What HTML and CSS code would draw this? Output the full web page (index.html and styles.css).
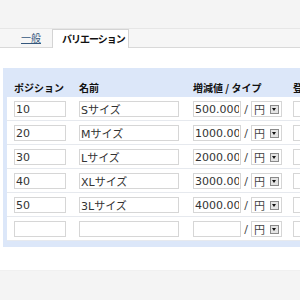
FILE: index.html
```html
<!DOCTYPE html>
<html lang="ja">
<head>
    <meta charset="UTF-8">
    <title>バリエーション</title>
    <link rel="stylesheet" href="styles.css">
</head>
<body>
    <!-- 上部の余白 -->
    <div class="top"></div>

    <!-- タブ -->
    <div class="tabs">
        <a href="#" class="tab">一般</a>
        <span class="tab active">バリエーション</span>
    </div>

    <div class="gap"></div>

    <!-- バリエーション一覧 -->
    <div class="panel">
        <div class="row head">
            <div class="c-pos">ポジション</div>
            <div class="c-name">名前</div>
            <div class="c-price">増減値 / タイプ</div>
            <div class="c-rest">登録</div>
        </div>
        <div class="list">
            <div class="row">
                <div class="c-pos"><input class="in-pos" type="text" value="10"></div>
                <div class="c-name"><input class="in-name" type="text" value="Sサイズ"></div>
                <div class="c-price"><input class="in-price" type="text" value="500.000"><span class="slash">/</span><span class="sel">円<span class="btn"></span></span></div>
                <div class="c-rest"><input class="in-rest" type="text"></div>
            </div>
            <div class="row">
                <div class="c-pos"><input class="in-pos" type="text" value="20"></div>
                <div class="c-name"><input class="in-name" type="text" value="Mサイズ"></div>
                <div class="c-price"><input class="in-price" type="text" value="1000.000"><span class="slash">/</span><span class="sel">円<span class="btn"></span></span></div>
                <div class="c-rest"><input class="in-rest" type="text"></div>
            </div>
            <div class="row">
                <div class="c-pos"><input class="in-pos" type="text" value="30"></div>
                <div class="c-name"><input class="in-name" type="text" value="Lサイズ"></div>
                <div class="c-price"><input class="in-price" type="text" value="2000.000"><span class="slash">/</span><span class="sel">円<span class="btn"></span></span></div>
                <div class="c-rest"><input class="in-rest" type="text"></div>
            </div>
            <div class="row">
                <div class="c-pos"><input class="in-pos" type="text" value="40"></div>
                <div class="c-name"><input class="in-name" type="text" value="XLサイズ"></div>
                <div class="c-price"><input class="in-price" type="text" value="3000.000"><span class="slash">/</span><span class="sel">円<span class="btn"></span></span></div>
                <div class="c-rest"><input class="in-rest" type="text"></div>
            </div>
            <div class="row">
                <div class="c-pos"><input class="in-pos" type="text" value="50"></div>
                <div class="c-name"><input class="in-name" type="text" value="3Lサイズ"></div>
                <div class="c-price"><input class="in-price" type="text" value="4000.000"><span class="slash">/</span><span class="sel">円<span class="btn"></span></span></div>
                <div class="c-rest"><input class="in-rest" type="text"></div>
            </div>
            <div class="row">
                <div class="c-pos"><input class="in-pos" type="text"></div>
                <div class="c-name"><input class="in-name" type="text"></div>
                <div class="c-price"><input class="in-price" type="text"><span class="slash">/</span><span class="sel">円<span class="btn"></span></span></div>
                <div class="c-rest"><input class="in-rest" type="text"></div>
            </div>
        </div>
    </div>

    <div class="foot"></div>
</body>
</html>
```

FILE: styles.css
```css
body {
    margin: 0;
    font-family: "DejaVu Sans", "Noto Sans CJK JP", sans-serif;
    font-size: 11px;
    color: #333;
    background-color: #fff;
    overflow: hidden;
}
.top {
    height: 28px;
    background-color: #f4f4f4;
    border-bottom: 1px solid #e6e6e6;
}
.tabs {
    display: flex;
    align-items: flex-end;
    height: 18px;
    background-color: #f6f6f6;
    border-bottom: 1px solid #d9d9d9;
    font-family: "Noto Sans CJK JP", sans-serif;
    font-size: 10px;
    font-weight: bold;
}
.tab {
    line-height: 16px;
    margin-bottom: 1px;
}
a.tab {
    margin-left: 21px;
    color: #34577d;
    font-weight: normal;
    text-decoration: underline;
}
.tab.active {
    margin-left: 11px;
    margin-bottom: -1px;
    width: 66px;
    height: 18px;
    padding-left: 9px;
    line-height: 17px;
    background-color: #fff;
    border: 1px solid #d4d4d4;
    border-bottom: none;
    color: #111;
    letter-spacing: -1px;
}
.gap {
    height: 20px;
}
.panel {
    margin-left: 3px;
    padding: 0 0 6px 4px;
    background-color: #dce7f9;
}
.row {
    display: flex;
    align-items: center;
    height: 20px;
    padding: 0 0 3px 7px;
    border-bottom: 1px solid #e6e9ee;
    white-space: nowrap;
}
.row.head {
    height: 26px;
    padding-bottom: 3px;
    align-items: flex-end;
    border-bottom: none;
    margin-left: -4px;
    padding-left: 11px;
    font-family: "Noto Sans CJK JP", sans-serif;
    font-size: 10px;
    font-weight: bold;
    color: #111;
    line-height: 12px;
}
.list {
    background-color: #fff;
}
.list .row {
    align-items: flex-end;
}
.c-pos {
    width: 65px;
    flex: none;
}
.c-name {
    width: 114px;
    flex: none;
}
.c-price {
    width: 100px;
    flex: none;
    display: flex;
    align-items: center;
}
.c-rest {
    flex: none;
}
input {
    box-sizing: border-box;
    height: 16px;
    margin: 0;
    padding: 0 1px;
    border: 1px solid #d6d6d6;
    font-family: "DejaVu Sans", "Noto Sans CJK JP", sans-serif;
    font-size: 11px;
    color: #333;
    display: block;
}
.in-pos {
    width: 52px;
}
.in-name {
    width: 100px;
}
.in-price {
    width: 48px;
}
.in-rest {
    width: 40px;
}
.slash {
    width: 10px;
    text-align: center;
    color: #444;
}
.sel {
    box-sizing: border-box;
    display: flex;
    align-items: center;
    justify-content: space-between;
    width: 31px;
    height: 16px;
    padding: 0 2px 0 2px;
    border: 1px solid #d6d6d6;
    font-family: "Noto Sans CJK JP", sans-serif;
    font-size: 11px;
    color: #444;
}
.btn {
    position: relative;
    box-sizing: border-box;
    width: 9px;
    height: 9px;
    border: 1px solid #8a8a8a;
    background-color: #e4e4e4;
}
.btn::after {
    content: "";
    position: absolute;
    left: 1px;
    top: 2px;
    border-left: 2.5px solid transparent;
    border-right: 2.5px solid transparent;
    border-top: 3px solid #111;
}
.foot {
    height: 23px;
    border-bottom: 1px solid #f0f0f0;
}
html {
    background-color: #f4f4f4;
}
```
